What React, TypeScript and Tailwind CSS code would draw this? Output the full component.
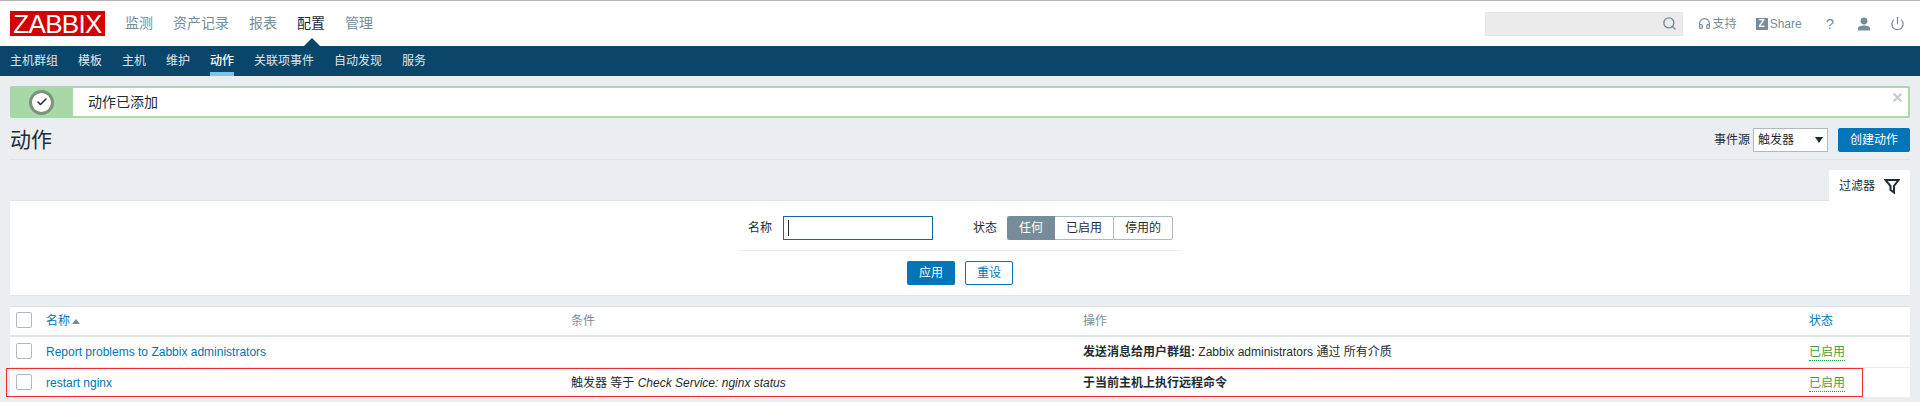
import { Check, Headphones, Power, Search, X } from "lucide-react";

const topNav = ["监测", "资产记录", "报表", "配置", "管理"];
const subNav = ["主机群组", "模板", "主机", "维护", "动作", "关联项事件", "自动发现", "服务"];

// shared column template for the actions table
const cols = "grid grid-cols-[36px_525px_512px_726px_1fr] items-center";

function Checkbox() {
  return <span className="mb-[2px] block h-4 w-4 rounded-[2px] border border-[#acbbc2] bg-white" />;
}

function TopBar() {
  return (
    <header className="flex h-[46px] items-center border-t border-t-[#b5b5b5] bg-white pr-[15px] pl-[10px]">
      <div className="flex h-[25px] w-[95px] items-center justify-center bg-[#d40000] text-[26px] leading-none tracking-[-0.7px] text-white">
        ZABBIX
      </div>
      <nav className="ml-5 flex gap-5 text-[14px]">
        {topNav.map((item) => (
          <a
            key={item}
            className={`relative flex h-[45px] items-center ${item === "配置" ? "text-[#1f2c33]" : "text-[#768d99]"}`}
          >
            {item}
            {item === "配置" && (
              <span className="absolute bottom-0 left-[7px] h-0 w-0 border-x-[8px] border-b-[8px] border-x-transparent border-b-[#0a466a]" />
            )}
          </a>
        ))}
      </nav>
      <div className="ml-auto flex items-center text-[#768d99]">
        <div className="flex h-6 w-[198px] items-center justify-end border border-[#e6e6e6] bg-[#ebebeb] pr-[5px]">
          <Search size={15} strokeWidth={2.2} className="text-[#768d99]" />
        </div>
        <Headphones size={13} strokeWidth={2.2} className="ml-[15px]" />
        <span className="ml-[2px] text-[12px]">支持</span>
        <span className="ml-[19px] flex h-3 w-3 items-center justify-center bg-[#768d99] text-[10px] leading-none font-bold text-white">
          Z
        </span>
        <span className="ml-[2px] text-[12px]">Share</span>
        <span className="ml-[24px] text-[15px] leading-none">?</span>
        <svg viewBox="0 0 14 14" className="ml-[23px] h-[14px] w-[14px] fill-[#768d99]">
          <circle cx="7" cy="4" r="3.4" />
          <path d="M1 13.5v-2.2C1 9.6 4 8.6 7 8.6s6 1 6 2.7v2.2z" />
        </svg>
        <Power size={15} strokeWidth={2} className="ml-[19px]" />
      </div>
    </header>
  );
}

function SubBar() {
  return (
    <nav className="flex h-[30px] gap-5 bg-[#0a466a] pl-[10px] text-[12px] text-[#dfe6ea]">
      {subNav.map((item) => (
        <a
          key={item}
          className={`flex h-[30px] items-center ${item === "动作" ? "border-b-4 border-[#7cc3ea] pt-1 font-medium text-white" : ""}`}
        >
          {item}
        </a>
      ))}
    </nav>
  );
}

function SuccessMessage() {
  return (
    <div className="relative mx-[10px] mt-[10px] flex h-8 rounded-[2px] border-2 border-[#a8d7a8] bg-white">
      <div className="flex w-[61px] shrink-0 items-center justify-center bg-[#a8d7a8] pr-[2px]">
        <span className="flex h-[25px] w-[25px] items-center justify-center rounded-full border-[3px] border-[#7a937a] bg-white">
          <Check size={12} strokeWidth={3} className="text-[#1f2c33]" />
        </span>
      </div>
      <span className="mt-[1px] ml-[15px] self-center text-[14px] text-[#1f2c33]">动作已添加</span>
      <X size={13} strokeWidth={4} className="absolute top-[3px] right-[4px] text-[#c3ccd1]" />
    </div>
  );
}

function TitleRow() {
  return (
    <div className="mx-[10px] flex h-[42px] items-start justify-between border-b border-[#dfe4e7] pt-[10px]">
      <h1 className="text-[21px] leading-6 font-normal text-[#1f2c33]">动作</h1>
      <div className="flex items-center text-[12px] text-[#1f2c33]">
        <span>事件源</span>
        <div className="relative ml-[3px] flex h-6 w-[75px] items-center border border-[#acbbc2] bg-white pl-1">
          触发器
          <span className="absolute top-[8px] right-[4px] h-0 w-0 border-x-[4px] border-t-[6px] border-x-transparent border-t-[#1f2c33]" />
        </div>
        <button className="ml-[10px] h-6 w-[72px] rounded-[2px] bg-[#0275b8] text-white">创建动作</button>
      </div>
    </div>
  );
}

function FilterPanel() {
  return (
    <section className="mx-[10px] mt-[10px]">
      <div className="flex justify-end">
        <div className="relative z-10 -mb-px flex h-[31px] w-[81px] items-center rounded-t-[2px] bg-white pl-[10px] text-[12px] text-[#1f2c33]">
          过滤器
          <svg viewBox="0 0 16 16" className="ml-[9px] h-4 w-4 fill-none stroke-[#1f2c33] stroke-2">
            <path d="M1.5 2h13L10 8v6.5L6.5 12V8z" />
          </svg>
        </div>
      </div>
      <div className="flex h-[96px] flex-col items-center border-y border-[#dfe4e7] bg-white pt-[15px] text-[12px] text-[#1f2c33]">
        <div className="flex h-[35px] w-[443px] items-start justify-center border-b border-[#ebeef0] pl-[1px]">
          <span className="flex h-6 items-center">名称</span>
          <div className="ml-[11px] flex h-6 w-[150px] items-center border border-[#0a6a9e] pl-1">
            <span className="h-4 w-px bg-[#1f2c33]" />
          </div>
          <span className="ml-10 flex h-6 items-center">状态</span>
          <div className="ml-[10px] flex h-6">
            <span className="flex w-12 items-center justify-center rounded-l-[2px] bg-[#768d99] text-white">任何</span>
            <span className="flex w-[58px] items-center justify-center border-y border-[#acbbc2]">已启用</span>
            <span className="flex w-[60px] items-center justify-center rounded-r-[2px] border border-[#acbbc2]">停用的</span>
          </div>
        </div>
        <div className="mt-[10px] flex gap-[10px]">
          <button className="h-6 w-12 rounded-[2px] bg-[#0275b8] text-white">应用</button>
          <button className="h-6 w-12 rounded-[2px] border border-[#0275b8] text-[#0275b8]">重设</button>
        </div>
      </div>
    </section>
  );
}

function EnabledLink() {
  return (
    <span className="inline-block border-b border-dotted border-[#1f9e3a] pb-[1px] leading-[14px] text-[#429e47]">
      已启用
    </span>
  );
}

function ActionsTable() {
  return (
    <section className="mx-[10px] mt-[10px] bg-white text-[12px]">
      <div className={`${cols} h-[31px] border-t border-b-2 border-t-[#dfe4e7] border-b-[#dfe4e7]`}>
        <span className="pl-[6px]">
          <Checkbox />
        </span>
        <span className="flex items-center gap-[2px] text-[#0275b8]">
          名称
          <span className="h-0 w-0 border-x-[4px] border-b-[5px] border-x-transparent border-b-[#768d99]" />
        </span>
        <span className="text-[#768d99]">条件</span>
        <span className="text-[#768d99]">操作</span>
        <span className="text-[#0275b8]">状态</span>
      </div>
      <div className={`${cols} h-[31px] border-b border-[#ebeef0]`}>
        <span className="pl-[6px]">
          <Checkbox />
        </span>
        <span className="text-[#0275b8]">Report problems to Zabbix administrators</span>
        <span />
        <span className="text-[#1f2c33]">
          <b>发送消息给用户群组:</b> Zabbix administrators 通过 所有介质
        </span>
        <span>
          <EnabledLink />
        </span>
      </div>
      <div className={`${cols} relative h-[29px]`}>
        <span className="pl-[6px]">
          <Checkbox />
        </span>
        <span className="text-[#0275b8]">restart nginx</span>
        <span className="text-[#1f2c33]">
          触发器 等于 <i>Check Service: nginx status</i>
        </span>
        <b className="text-[#1f2c33]">于当前主机上执行远程命令</b>
        <span>
          <EnabledLink />
        </span>
        <span className="absolute top-0 left-[-4px] h-[29px] w-[1857px] border border-[#f03030]" />
      </div>
    </section>
  );
}

export default function App() {
  return (
    <div
      className="h-[402px] overflow-hidden bg-[#ebeef0]"
      style={{ fontFamily: '"Liberation Sans", "Noto Sans CJK SC", sans-serif' }}
    >
      <TopBar />
      <SubBar />
      <SuccessMessage />
      <TitleRow />
      <FilterPanel />
      <ActionsTable />
    </div>
  );
}
